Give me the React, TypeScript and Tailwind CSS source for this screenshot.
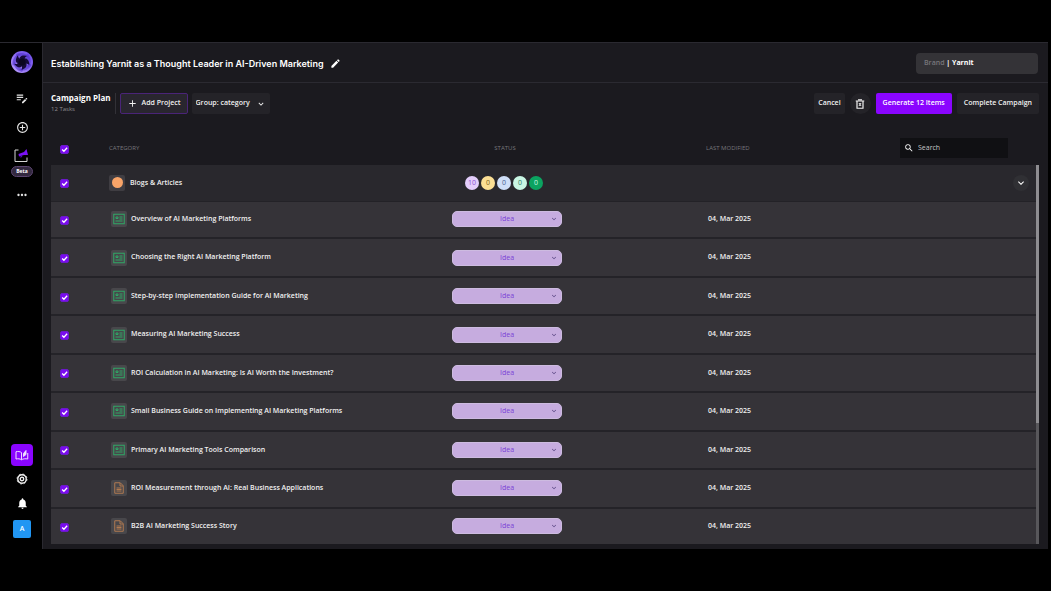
import { useState } from "react";
import type { ReactNode } from "react";
import {
  MdAdd,
  MdAddCircleOutline,
  MdEdit,
  MdEditNote,
  MdExpandMore,
  MdMoreHoriz,
  MdNotifications,
  MdSearch,
} from "react-icons/md";

type Kind = "blog" | "case";

const TASKS: { title: string; kind: Kind }[] = [
  { title: "Overview of AI Marketing Platforms", kind: "blog" },
  { title: "Choosing the Right AI Marketing Platform", kind: "blog" },
  { title: "Step-by-step Implementation Guide for AI Marketing", kind: "blog" },
  { title: "Measuring AI Marketing Success", kind: "blog" },
  { title: "ROI Calculation in AI Marketing: Is AI Worth the Investment?", kind: "blog" },
  { title: "Small Business Guide on Implementing AI Marketing Platforms", kind: "blog" },
  { title: "Primary AI Marketing Tools Comparison", kind: "blog" },
  { title: "ROI Measurement through AI: Real Business Applications", kind: "case" },
  { title: "B2B AI Marketing Success Story", kind: "case" },
];

const COUNTS = [
  { value: 10, style: "bg-[#e3cdfb] text-[#8a4fd0]" },
  { value: 0, style: "bg-[#fbdf94] text-[#7d6420]" },
  { value: 0, style: "bg-[#cfdff8] text-[#4a6391]" },
  { value: 0, style: "bg-[#c9f7e4] text-[#2f7d5f]" },
  { value: 0, style: "bg-[#0ba360] text-[#c9f7e4]" },
];

function Logo() {
  return (
    <svg viewBox="0 0 44 44" className="size-[22px]" aria-hidden="true">
      <defs>
        <linearGradient id="ring" x1="1" y1="0" x2="0" y2="1">
          <stop offset="0" stopColor="#6a4ae6" />
          <stop offset="0.5" stopColor="#8d6cf4" />
          <stop offset="1" stopColor="#c3a8ff" />
        </linearGradient>
      </defs>
      <circle cx="22" cy="22" r="22" fill="url(#ring)" />
      {[0, 72, 144, 216, 288].map((a) => (
        <path
          key={a}
          d="M10 6 C20 1 33 5 36 14 C28 8 18 8 12 14 Z"
          fill="#4a2cc4"
          opacity="0.55"
          transform={`rotate(${a} 22 22)`}
        />
      ))}
      {[0, 72, 144, 216, 288].map((a) => (
        <path
          key={a}
          d="M22 22 L17 13 C20 8 27 8 32 10 C28 12 27 15 28 19 Z"
          fill="#150a38"
          transform={`rotate(${a} 22 22)`}
        />
      ))}
      <circle cx="22" cy="22" r="7" fill="#0b0620" />
    </svg>
  );
}

function CampaignIcon() {
  return (
    <svg viewBox="0 0 30 30" className="size-[15px]" fill="none" aria-hidden="true">
      <path d="M9 4H2v23h24v-8" stroke="#d6d6d6" strokeWidth="2" />
      <path d="M9 12 L20 8 L25 2 L28 14 L20 14 L10 17 Z" fill="#7a12f5" />
      <path d="M13 15v5l4-3" fill="#5a0cc0" />
    </svg>
  );
}

function BookIcon() {
  return (
    <svg viewBox="0 0 28 24" className="h-3 w-3.5" fill="none" stroke="#f0dcff" strokeWidth="2" aria-hidden="true">
      <path d="M13 7C10 5 6 4.500 2 5.500V20c4-1 8-.5 11 1.500V7Z" />
      <path d="M13 21.500C16 19.500 21 19 25.500 20V8" />
      <path d="M17 15V9l5-6v8Z" fill="#f0dcff" />
    </svg>
  );
}

function SettingsIcon() {
  return (
    <svg viewBox="0 0 24 24" className="size-3" fill="none" stroke="#f2f2f2" aria-hidden="true">
      <circle cx="12" cy="12" r="8.500" strokeWidth="2.800" />
      <circle cx="12" cy="12" r="10" strokeWidth="1.600" strokeDasharray="3.900 3.950" />
      <circle cx="12" cy="12" r="3.500" strokeWidth="2.600" />
    </svg>
  );
}

function TrashIcon() {
  return (
    <svg viewBox="0 0 20 20" className="size-2.5" fill="none" stroke="#f2f2f2" strokeWidth="2.400" aria-hidden="true">
      <path d="M1.500 4h17M6 1.500h8M4 4v14.500h12V4M8 8.500l4 5M12 8.500l-4 5" />
    </svg>
  );
}

function TaskIcon({ kind }: { kind: Kind }) {
  return (
    <span className="flex size-4 shrink-0 items-center justify-center rounded-xs bg-[#48474b]">
      {kind === "blog" ? (
        <svg viewBox="0 0 24 24" className="size-3" fill="none" stroke="#2fa866" strokeWidth="2" aria-hidden="true">
          <rect x="1.500" y="2.500" width="21" height="19" />
          <path d="M6 8h4v3H6zM13 8h6M13 12h6M5 16h14" />
        </svg>
      ) : (
        <svg viewBox="0 0 24 24" className="size-3" fill="none" stroke="#b07a50" strokeWidth="2" aria-hidden="true">
          <path d="M3.500 1.500h11l6 6v15h-17zM14 2v6h6M7 12h10M7 15h10M7 18h10" />
        </svg>
      )}
    </span>
  );
}

function Check({ label }: { label: string }) {
  return (
    <label className="mt-0.5 ml-[9px] grid size-[9px] place-items-center">
      <input
        type="checkbox"
        defaultChecked
        aria-label={label}
        className="peer size-[9px] appearance-none rounded-xs border border-[#6a1ac8] [grid-area:1/1] checked:bg-[#7a0bf0]"
      />
      <svg
        viewBox="0 0 12 12"
        className="pointer-events-none invisible size-[7px] [grid-area:1/1] peer-checked:visible"
        fill="none"
        stroke="#fff"
        strokeWidth="2.200"
        aria-hidden="true"
      >
        <path d="M2 6l3 3 5.500-6" />
      </svg>
    </label>
  );
}

function SideButton({ label, children }: { label: string; children: ReactNode }) {
  return (
    <button type="button" aria-label={label} className="flex size-6 items-center justify-center text-[#e4e4e4]">
      {children}
    </button>
  );
}

function Sidebar() {
  return (
    <nav className="flex w-11 shrink-0 flex-col items-center justify-between bg-black pt-2 pb-[11px]">
      <div className="flex flex-col items-center">
        <Logo />
        <div className="mt-[13px] flex flex-col items-center gap-[5px]">
          <SideButton label="Write">
            <MdEditNote className="size-[14px]" />
          </SideButton>
          <SideButton label="Create">
            <MdAddCircleOutline className="size-[13px]" />
          </SideButton>
        </div>
        <button type="button" className="mt-[9px] flex flex-col items-center gap-[3px]">
          <CampaignIcon />
          <span className="rounded-full border border-[#5b4570] bg-[#33293f] px-1 text-[5px]/[9px] font-bold text-white">
            Beta
          </span>
        </button>
        <div className="mt-1.5">
          <SideButton label="More">
            <MdMoreHoriz className="size-[14px]" />
          </SideButton>
        </div>
      </div>
      <div className="flex flex-col items-center">
        <button
          type="button"
          aria-label="Campaigns"
          className="mb-px flex size-[22px] items-center justify-center rounded-sm bg-[#8a05ff]"
        >
          <BookIcon />
        </button>
        <SideButton label="Settings">
          <SettingsIcon />
        </SideButton>
        <SideButton label="Notifications">
          <MdNotifications className="size-[13px] text-white" />
        </SideButton>
        <button
          type="button"
          className="mt-[5px] flex size-[18px] items-center justify-center rounded-xs bg-[#2196f3] text-[7px] font-semibold text-white"
        >
          A
        </button>
      </div>
    </nav>
  );
}

function StatusSelect({ title }: { title: string }) {
  return (
    <div className="grid items-center">
      <select
        aria-label={`Status of ${title}`}
        className="h-4 w-full appearance-none rounded-[5px] border border-[#cdbbe0] bg-[#c6acdf] text-center text-[7px]/[14px] font-normal text-[#7a3fd6] [grid-area:1/1] [text-align-last:center]"
      >
        <option>Idea</option>
        <option>Draft</option>
        <option>Review</option>
      </select>
      <MdExpandMore className="pointer-events-none mr-1 size-2 justify-self-end text-[#4d3a78] [grid-area:1/1]" />
    </div>
  );
}

export default function App() {
  const [open, setOpen] = useState(true);
  return (
    <div className="flex min-h-screen flex-col bg-black pt-[42px] pr-[3px] pb-[42px] font-['Open_Sans','Noto_Sans',sans-serif] text-[7px] font-semibold text-[#f1f1f1]">
      <div className="flex flex-1 border-t border-[#2a2930]">
        <Sidebar />
        <main className="-ml-0.5 flex min-w-0 flex-1 flex-col border-l border-[#2a2930] bg-[#1b1a1f]">
          <header className="flex h-10 items-center justify-between border-b border-[#2b2a31] pt-0.5 pr-[10px] pl-2">
            <div className="flex items-center gap-1.5">
              <h1 className="font-['Inter',sans-serif] text-[9px] font-semibold text-white">
                Establishing Yarnit as a Thought Leader in AI-Driven Marketing
              </h1>
              <button type="button" aria-label="Rename">
                <MdEdit className="size-[11px] text-white" />
              </button>
            </div>
            <div className="flex h-[21px] w-[122px] items-center rounded-sm bg-[#343337] px-2">
              <span className="text-[#77767b]">Brand</span>
              <span className="font-bold text-white">&nbsp;| Yarnit</span>
            </div>
          </header>

          <div className="flex items-center justify-between pt-2.5 pr-[9px] pl-2">
            <div className="flex items-center">
              <div className="border-r border-[#323137] pr-1">
                <h2 className="text-[8px]/[10px] font-bold text-white">Campaign Plan</h2>
                <p className="pt-0.5 text-[6px]/[9px] font-normal text-[#8d8c91]">12 Tasks</p>
              </div>
              <button
                type="button"
                className="ml-1 flex h-[21px] items-center gap-1 rounded-xs border border-[#4a2478] bg-[#29262f] px-1.5"
              >
                <MdAdd className="size-[11px]" />
                Add Project
              </button>
              <div className="ml-1 grid items-center">
                <select
                  aria-label="Group by"
                  className="h-[21px] w-[78px] appearance-none rounded-xs bg-[#242328] pl-1 [grid-area:1/1]"
                >
                  <option>Group: category</option>
                  <option>Group: status</option>
                </select>
                <MdExpandMore className="pointer-events-none mr-1 size-2.5 justify-self-end [grid-area:1/1]" />
              </div>
            </div>
            <div className="flex items-center gap-[5px]">
              <button type="button" className="h-[21px] rounded-xs bg-[#242328] px-1">
                Cancel
              </button>
              <button
                type="button"
                aria-label="Delete"
                className="flex size-[21px] items-center justify-center rounded-full bg-[#242328]"
              >
                <TrashIcon />
              </button>
              <button type="button" className="h-[21px] rounded-xs bg-[#8a05ff] px-[7px] text-white">
                Generate 12 Items
              </button>
              <button type="button" className="h-[21px] rounded-xs bg-[#242328] px-[7px]">
                Complete Campaign
              </button>
            </div>
          </div>

          <div className="mt-[17px] flex pr-[9px] pl-2">
            <table className="h-[413px] flex-1 table-fixed border-collapse text-left">
              <colgroup>
                <col className="w-[58px]" />
                <col className="w-[343px]" />
                <col className="w-[110px]" />
                <col />
                <col className="w-[136px]" />
              </colgroup>
              <thead>
                <tr className="h-[34px] text-[6px] text-[#77767b]">
                  <th>
                    <Check label="Select all" />
                  </th>
                  <th className="font-normal">CATEGORY</th>
                  <th className="pr-1 text-center font-normal">STATUS</th>
                  <th className="pl-36 font-normal">LAST MODIFIED</th>
                  <th className="font-normal">
                    <label className="flex h-5 w-[108px] items-center gap-1 bg-[#101013] pl-1 text-white">
                      <MdSearch className="size-[10px] shrink-0" />
                      <input
                        type="search"
                        aria-label="Search"
                        placeholder="Search"
                        className="w-full min-w-0 bg-transparent text-[7px] outline-none placeholder:text-[#c4c4c6]"
                      />
                    </label>
                  </th>
                </tr>
              </thead>
              <tbody>
                <tr className="h-9 border-b border-[#232227] bg-[#29282d]">
                  <td>
                    <Check label="Select Blogs & Articles" />
                  </td>
                  <td>
                    <div className="flex items-center gap-[5px]">
                      <span className="flex size-4 items-center justify-center rounded-xs bg-[#3f3d42]">
                        <span className="size-[11px] rounded-full bg-[#f9a468]" />
                      </span>
                      Blogs &amp; Articles
                    </div>
                  </td>
                  <td>
                    <div className="flex justify-center gap-0.5 pr-1.5">
                      {COUNTS.map((c, i) => (
                        <span
                          key={i}
                          className={`flex size-3.5 items-center justify-center rounded-full font-normal ${c.style}`}
                        >
                          {c.value}
                        </span>
                      ))}
                    </div>
                  </td>
                  <td />
                  <td className="pr-[7px]">
                    <button
                      type="button"
                      aria-label="Toggle group"
                      aria-expanded={open}
                      onClick={() => setOpen(!open)}
                      className="ml-auto flex size-4 items-center justify-center rounded-full bg-[#303034]"
                    >
                      <MdExpandMore className="size-3 text-white" />
                    </button>
                  </td>
                </tr>
                {open &&
                  TASKS.map((t) => (
                    <tr key={t.title} className="border-b-2 border-[#242328] bg-[#353338] last:border-b-0">
                      <td>
                        <Check label={`Select ${t.title}`} />
                      </td>
                      <td>
                        <div className="flex items-center gap-1 pl-0.5">
                          <TaskIcon kind={t.kind} />
                          {t.title}
                        </div>
                      </td>
                      <td>
                        <StatusSelect title={t.title} />
                      </td>
                      <td className="pl-[146px]">04, Mar 2025</td>
                      <td />
                    </tr>
                  ))}
              </tbody>
            </table>
            <div className="mt-[34px] flex w-[3px] flex-col bg-[#58575b]">
              <div className="h-[68%] bg-[#8e8d91]" />
            </div>
          </div>
        </main>
      </div>
    </div>
  );
}
